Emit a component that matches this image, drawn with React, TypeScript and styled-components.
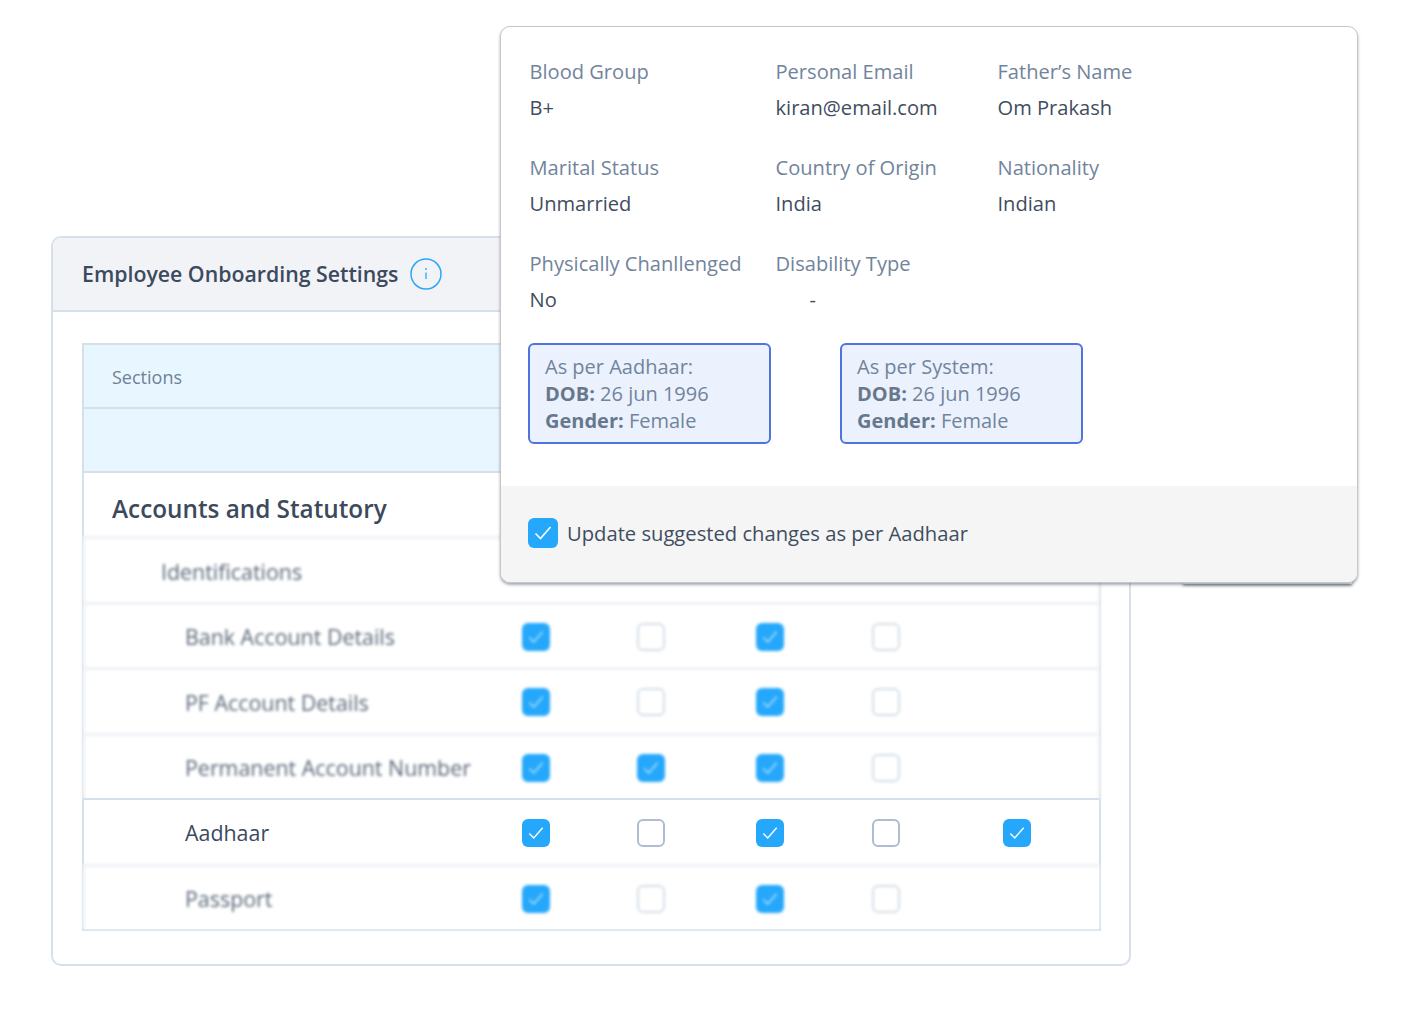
import React from "react";
import styled, { createGlobalStyle } from "styled-components";

const Global = createGlobalStyle`
  html, body { margin: 0; padding: 0; background: #fff; }
  * { box-sizing: border-box; }
  body { font-family: "Open Sans", "Noto Sans", sans-serif; }
`;

const Scene = styled.div`
  position: relative;
  width: 1413px;
  height: 1009px;
  padding: 236px 0 0 51px;
  overflow: hidden;
  background: #fff;
`;

const Card = styled.section`
  width: 1080px;
  height: 730px;
  border: 2px solid #d6e0ea;
  border-radius: 10px;
  background: #fff;
  overflow: hidden;
`;

const CardHeader = styled.header`
  height: 74px;
  display: flex;
  align-items: center;
  gap: 11px;
  padding: 0 0 2px 29px;
  background: #f2f3f7;
  border-bottom: 2px solid #d6e0ea;
`;

const CardTitle = styled.h1`
  margin: 0;
  font-size: 21.3px;
  font-weight: 600;
  color: #3c4a5d;
`;

const InfoIcon = styled.svg`
  width: 32px;
  height: 32px;
  flex: none;
  margin-top: 2px;
`;

const Table = styled.div`
  width: 1019px;
  margin: 31px 0 0 29px;
  border: 2px solid #d6e0ea;
`;

const HeaderRow = styled.div`
  height: 64px;
  display: flex;
  align-items: center;
  padding: 2px 0 0 28px;
  background: #e8f6ff;
  border-bottom: 2px solid #d6e0ea;
  font-size: 18px;
  color: #6f8197;
`;

const SectionRow = styled.div`
  height: 63px;
  display: flex;
  align-items: center;
  padding: 8px 0 0 28px;
  font-size: 24.3px;
  font-weight: 600;
  color: #3c4a5d;
`;

const Row = styled.div<{ $soft?: boolean; $edge?: boolean }>`
  position: relative;
  z-index: ${(p) => (p.$soft ? 0 : 1)};
  height: 65.5px;
  display: grid;
  grid-template-columns: 394px 116px 114px 124px 108px 154px 1fr;
  align-items: center;
  border-top: ${(p) => (p.$soft ? "3px solid #eef1f6" : "2px solid #d6e0ea")};
  margin-left: ${(p) => (p.$soft ? "-2px" : "0")};
  margin-right: ${(p) => (p.$soft && !p.$edge ? "-2px" : "0")};
  padding: 2px 0 0 ${(p) => (p.$soft ? "2px" : "0")};
  background: ${(p) => (p.$soft ? "#fff" : "transparent")};
  box-shadow: ${(p) =>
    p.$soft
      ? p.$edge
        ? "inset 3px 0 0 #eef1f6"
        : "inset 3px 0 0 #eef1f6, inset -3px 0 0 #eef1f6"
      : "none"};
  filter: ${(p) => (p.$soft ? "blur(1.4px)" : "none")};
`;

const RowLabel = styled.div<{ $indent: number; $soft?: boolean }>`
  padding-left: ${(p) => p.$indent}px;
  font-size: 21.4px;
  white-space: nowrap;
  color: ${(p) => (p.$soft ? "#5a6778" : "#3c4a5d")};
`;

const Cell = styled.div`
  display: flex;
  justify-content: center;
  align-items: center;
`;

const Box = styled.div<{ $checked?: boolean; $size?: number; $faint?: boolean }>`
  width: ${(p) => p.$size ?? 28}px;
  height: ${(p) => p.$size ?? 28}px;
  flex: none;
  border-radius: 6px;
  background: ${(p) => (p.$checked ? "#25a8fb" : "#fff")};
  border: ${(p) =>
    p.$checked ? "none" : p.$faint ? "2px solid #d5dde6" : "2px solid #aebdcf"};
  display: flex;
  align-items: center;
  justify-content: center;

  svg {
    opacity: ${(p) => (p.$faint ? 0.65 : 1)};
  }
`;

const Popover = styled.aside`
  position: absolute;
  left: 500px;
  top: 26px;
  width: 858px;
  height: 557px;
  background: #fff;
  border: 1px solid #c4c8cc;
  border-radius: 10px;
  box-shadow: 0 2px 3px rgba(60, 70, 85, 0.45);
  overflow: hidden;
  display: flex;
  flex-direction: column;
`;

const Backing = styled.div`
  position: absolute;
  left: 1183px;
  top: 578px;
  width: 169px;
  height: 6px;
  box-shadow: 0 2px 3px rgba(60, 70, 85, 0.55);
`;

const Body = styled.div`
  flex: 1;
  padding: 31px 0 0 27px;
`;

const Fields = styled.div`
  display: grid;
  grid-template-columns: 246px 222px 1fr;
  grid-auto-rows: 63px;
  row-gap: 33px;
  padding-left: 1.5px;
`;

const Field = styled.div`
  display: flex;
  flex-direction: column;
  gap: 9px;
  font-size: 20.1px;
  line-height: 27px;
  white-space: nowrap;
`;

const FieldLabel = styled.span`
  color: #71849b;
`;

const FieldValue = styled.span<{ $indent?: number }>`
  color: #3f4d60;
  padding-left: ${(p) => p.$indent ?? 0}px;
`;

const Compare = styled.div`
  display: flex;
  gap: 69px;
  margin-top: 30px;
`;

const Note = styled.div`
  width: 243px;
  height: 101px;
  padding: 8px 15px;
  background: #ebf2fe;
  border: 2px solid #4f74e0;
  border-radius: 6px;
  font-size: 20px;
  line-height: 27px;
  color: #71849b;
  white-space: nowrap;

  b {
    font-weight: 700;
    color: #67788d;
  }
`;

const Footer = styled.footer`
  height: 96px;
  flex: none;
  display: flex;
  align-items: center;
  gap: 9px;
  padding: 0 0 2px 27px;
  background: #f5f5f5;
  font-size: 20.2px;
  color: #3f4d60;
`;

const Check = ({ size = 16 }: { size?: number }) => (
  <svg width={size} height={size} viewBox="0 0 18 18" fill="none">
    <path d="M1.5 9.5 L6.5 14.5 L16.5 3" stroke="#fff" strokeWidth="1.6" fill="none" />
  </svg>
);

const Mark = ({ on, faint }: { on: boolean; faint: boolean }) => (
  <Cell>
    <Box $checked={on} $faint={faint}>
      {on && <Check />}
    </Box>
  </Cell>
);

const rows = [
  { label: "Identifications", indent: 77, soft: true, marks: [] as boolean[] },
  { label: "Bank Account Details", indent: 101, soft: true, marks: [true, false, true, false] },
  { label: "PF Account Details", indent: 101, soft: true, marks: [true, false, true, false] },
  { label: "Permanent Account Number", indent: 101, soft: true, marks: [true, true, true, false] },
  { label: "Aadhaar", indent: 101, soft: false, marks: [true, false, true, false, true] },
  { label: "Passport", indent: 101, soft: true, edge: true, marks: [true, false, true, false] },
];

const fields = [
  { label: "Blood Group", value: "B+" },
  { label: "Personal Email", value: "kiran@email.com" },
  { label: "Father’s Name", value: "Om Prakash" },
  { label: "Marital Status", value: "Unmarried" },
  { label: "Country of Origin", value: "India" },
  { label: "Nationality", value: "Indian" },
  { label: "Physically Chanllenged", value: "No" },
  { label: "Disability Type", value: "-", indent: 34 },
];

export default function App() {
  return (
    <>
      <Global />
      <Scene>
        <Card>
          <CardHeader>
            <CardTitle>Employee Onboarding Settings</CardTitle>
            <InfoIcon viewBox="0 0 32 32" fill="none">
              <circle cx="16" cy="16" r="15" stroke="#29a8f7" strokeWidth="1.5" />
              <circle cx="16" cy="11" r="0.9" fill="#29a8f7" />
              <path d="M16 14.5 V21" stroke="#29a8f7" strokeWidth="1.3" />
            </InfoIcon>
          </CardHeader>
          <Table>
            <HeaderRow>Sections</HeaderRow>
            <HeaderRow />
            <SectionRow>Accounts and Statutory</SectionRow>
            {rows.map((r) => (
              <Row key={r.label} $soft={r.soft} $edge={r.edge}>
                <RowLabel $indent={r.indent} $soft={r.soft}>
                  {r.label}
                </RowLabel>
                {r.marks.map((on, i) => (
                  <Mark key={i} on={on} faint={r.soft} />
                ))}
              </Row>
            ))}
          </Table>
        </Card>
        <Backing />
        <Popover>
          <Body>
            <Fields>
              {fields.map((f) => (
                <Field key={f.label}>
                  <FieldLabel>{f.label}</FieldLabel>
                  <FieldValue $indent={f.indent}>{f.value}</FieldValue>
                </Field>
              ))}
            </Fields>
            <Compare>
              <Note>
                As per Aadhaar:
                <br />
                <b>DOB:</b> 26 jun 1996
                <br />
                <b>Gender:</b> Female
              </Note>
              <Note>
                As per System:
                <br />
                <b>DOB:</b> 26 jun 1996
                <br />
                <b>Gender:</b> Female
              </Note>
            </Compare>
          </Body>
          <Footer>
            <Box $checked $size={30}>
              <Check size={18} />
            </Box>
            Update suggested changes as per Aadhaar
          </Footer>
        </Popover>
      </Scene>
    </>
  );
}
